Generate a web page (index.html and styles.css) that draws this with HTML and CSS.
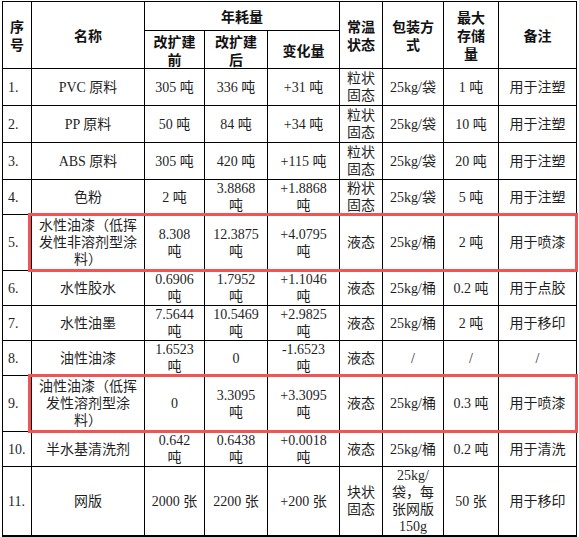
FILE: index.html
```html
<!DOCTYPE html>
<html lang="zh-CN">
<head>
  <meta charset="UTF-8" />
  <meta name="viewport" content="width=device-width, initial-scale=1.0" />
  <title>原辅材料消耗表</title>
  <link rel="stylesheet" href="styles.css">
</head>
<body>
  <table class="usage">
    <colgroup>
      <col class="c-no">
      <col class="c-name">
      <col class="c-before">
      <col class="c-after">
      <col class="c-diff">
      <col class="c-state">
      <col class="c-pack">
      <col class="c-max">
      <col class="c-note">
    </colgroup>
    <thead>
      <tr class="head-top">
        <th rowspan="2">序<br>号</th>
        <th rowspan="2">名称</th>
        <th colspan="3">年耗量</th>
        <th rowspan="2">常温<br>状态</th>
        <th rowspan="2">包装方<br>式</th>
        <th rowspan="2">最大<br>存储<br>量</th>
        <th rowspan="2">备注</th>
      </tr>
      <tr class="head-sub">
        <th>改扩建<br>前</th>
        <th>改扩建<br>后</th>
        <th>变化量</th>
      </tr>
    </thead>
    <tbody>
      <tr class="solid">
        <td class="no">1.</td>
        <td>PVC 原料</td>
        <td>305 吨</td>
        <td>336 吨</td>
        <td>+31 吨</td>
        <td>粒状<br>固态</td>
        <td>25kg/袋</td>
        <td>1 吨</td>
        <td>用于注塑</td>
      </tr>
      <tr class="solid">
        <td class="no">2.</td>
        <td>PP 原料</td>
        <td>50 吨</td>
        <td>84 吨</td>
        <td>+34 吨</td>
        <td>粒状<br>固态</td>
        <td>25kg/袋</td>
        <td>10 吨</td>
        <td>用于注塑</td>
      </tr>
      <tr class="solid">
        <td class="no">3.</td>
        <td>ABS 原料</td>
        <td>305 吨</td>
        <td>420 吨</td>
        <td>+115 吨</td>
        <td>粒状<br>固态</td>
        <td>25kg/袋</td>
        <td>20 吨</td>
        <td>用于注塑</td>
      </tr>
      <tr>
        <td class="no">4.</td>
        <td>色粉</td>
        <td>2 吨</td>
        <td>3.8868<br>吨</td>
        <td>+1.8868<br>吨</td>
        <td>粉状<br>固态</td>
        <td>25kg/袋</td>
        <td>5 吨</td>
        <td>用于注塑</td>
      </tr>
      <tr class="tall">
        <td class="no">5.</td>
        <td class="mark">水性油漆（低挥<br>发性非溶剂型涂<br>料）</td>
        <td>8.308<br>吨</td>
        <td>12.3875<br>吨</td>
        <td>+4.0795<br>吨</td>
        <td>液态</td>
        <td>25kg/桶</td>
        <td>2 吨</td>
        <td>用于喷漆</td>
      </tr>
      <tr>
        <td class="no">6.</td>
        <td>水性胶水</td>
        <td>0.6906<br>吨</td>
        <td>1.7952<br>吨</td>
        <td>+1.1046<br>吨</td>
        <td>液态</td>
        <td>25kg/桶</td>
        <td>0.2 吨</td>
        <td>用于点胶</td>
      </tr>
      <tr>
        <td class="no">7.</td>
        <td>水性油墨</td>
        <td>7.5644<br>吨</td>
        <td>10.5469<br>吨</td>
        <td>+2.9825<br>吨</td>
        <td>液态</td>
        <td>25kg/桶</td>
        <td>2 吨</td>
        <td>用于移印</td>
      </tr>
      <tr>
        <td class="no">8.</td>
        <td>油性油漆</td>
        <td>1.6523<br>吨</td>
        <td>0</td>
        <td>-1.6523<br>吨</td>
        <td>液态</td>
        <td>/</td>
        <td>/</td>
        <td>/</td>
      </tr>
      <tr class="tall">
        <td class="no">9.</td>
        <td class="mark">油性油漆（低挥<br>发性溶剂型涂<br>料）</td>
        <td>0</td>
        <td>3.3095<br>吨</td>
        <td>+3.3095<br>吨</td>
        <td>液态</td>
        <td>25kg/桶</td>
        <td>0.3 吨</td>
        <td>用于喷漆</td>
      </tr>
      <tr>
        <td class="no">10.</td>
        <td>半水基清洗剂</td>
        <td>0.642<br>吨</td>
        <td>0.6438<br>吨</td>
        <td>+0.0018<br>吨</td>
        <td>液态</td>
        <td>25kg/桶</td>
        <td>0.2 吨</td>
        <td>用于清洗</td>
      </tr>
      <tr>
        <td class="no">11.</td>
        <td>网版</td>
        <td>2000 张</td>
        <td>2200 张</td>
        <td>+200 张</td>
        <td>块状<br>固态</td>
        <td>25kg/<br>袋，每<br>张网版<br>150g</td>
        <td>50 张</td>
        <td>用于移印</td>
      </tr>
    </tbody>
  </table>
</body>
</html>
```

FILE: styles.css
```css
body {
  margin: 0;
  padding: 1px 0 0 2px;
  background-color: #fff;
}
.usage {
  border-collapse: collapse;
  table-layout: fixed;
  width: 574px;
  border-bottom: 2px solid #000;
  font-family: "Liberation Serif", "Noto Sans CJK SC", serif;
  font-size: 14px;
  color: #1f1f1f;
}
.c-no { width: 29px; }
.c-name { width: 113px; }
.c-before { width: 60px; }
.c-after { width: 63px; }
.c-diff { width: 72px; }
.c-state { width: 43px; }
.c-pack { width: 61px; }
.c-max { width: 55px; }
.c-note { width: 78px; }
.usage th,
.usage td {
  border: 1px solid #000;
  padding: 0 2px;
  text-align: center;
  vertical-align: middle;
  line-height: 17px;
}
.usage th {
  font-family: "Noto Sans CJK SC", sans-serif;
  font-weight: bold;
  color: #111;
  line-height: 18px;
}
.head-top {
  height: 29px;
}
.head-sub {
  height: 38px;
}
.solid {
  height: 37px;
}
.usage td.no {
  text-align: left;
  padding-left: 5px;
}
.tall td {
  padding-top: 2px;
  padding-bottom: 2px;
}
.mark {
  position: relative;
}
.mark::after {
  content: "";
  position: absolute;
  left: -4px;
  top: -2px;
  bottom: -2px;
  width: 550px;
  border: 3px solid #f25454;
  box-sizing: border-box;
  pointer-events: none;
}
```
